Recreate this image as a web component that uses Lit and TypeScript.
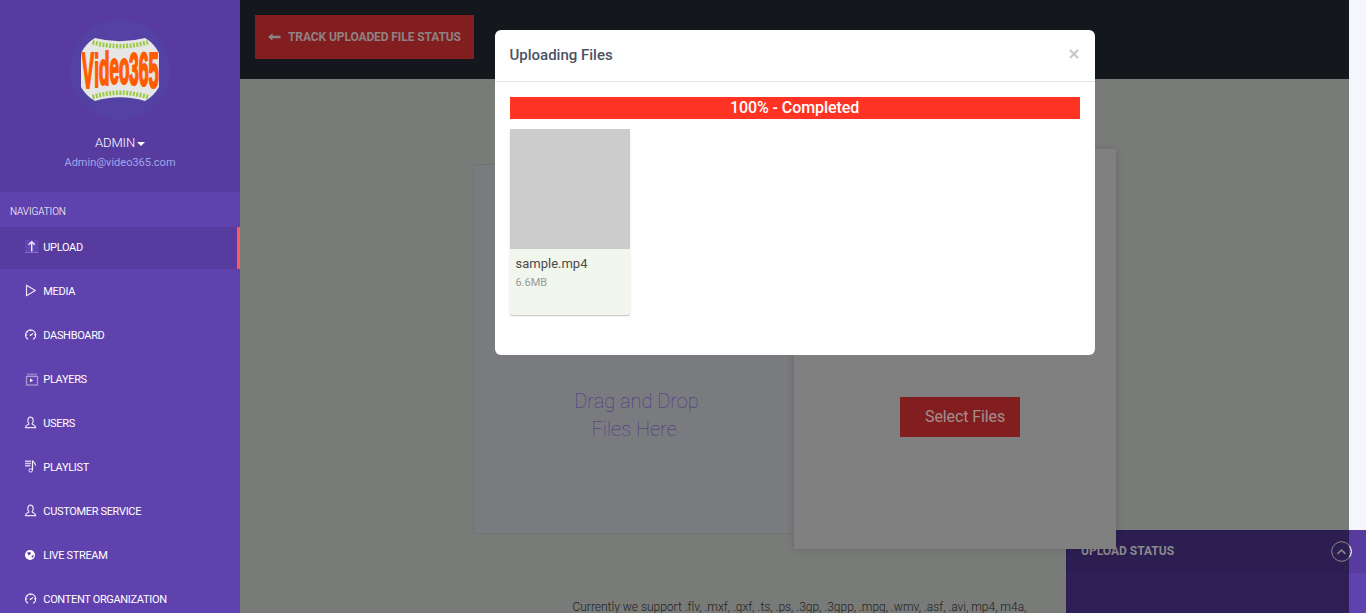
import { LitElement, html, css, svg } from "lit";
import { customElement } from "lit/decorators.js";

const icons: Record<string, any> = {
  upload: svg`<rect x="0" y="0" width="13.500" height="12" fill="#6545b4"/><path d="M0 12.500H13.500" stroke="#8570c6"/><path d="M6.700 11.500V2M3.600 4.800L6.700 1.700L9.800 4.800" stroke="#ece8f8" stroke-width="1.500" fill="none"/>`,
  media: svg`<path d="M1.500 1.200V11.700L10.300 6.400Z" stroke="#e8e4f4" stroke-width="1.200" fill="none" stroke-linejoin="round"/>`,
  gauge: svg`<path d="M3.300 11.200L1.900 10.500A5.100 5.100 0 1 1 9.300 10.500L7.900 11.200M5.600 7.200L8.200 5.400M5.500 2V3.300M2.200 3.600L3 4.400M.8 6.900H2.200M9 6.900H10.400" stroke="#efecf8" stroke-width="1.100" fill="none"/><circle cx="5.500" cy="7.200" r=".8" fill="#fff"/>`,
  players: svg`<path d="M2 2.500H12" stroke="#8d78c9" stroke-width="2"/><rect x="1.500" y="4.500" width="11" height="8.500" fill="none" stroke="#ab9cd9" stroke-width="1.200"/><path d="M5 6.600V10.200L8.200 8.400Z" fill="#fff"/>`,
  user: svg`<path d="M3.900 7.800C2.200 5.800 2.400 1.200 5.500 1.200S8.800 5.800 7.100 7.800C7.300 9 10.600 8.800 10.600 11.600H.5C.5 8.800 3.700 9 3.900 7.800Z" stroke="#e8e4f4" stroke-width="1.200" fill="none"/>`,
  playlist: svg`<path d="M0 1.200H6M0 3.500H6M0 5.800H5.500" stroke="#d0c8ea" stroke-width="1.500"/><path d="M7.500 10.500V.5C8 2.500 10.500 2.500 10.700 5.500" stroke="#efecf8" stroke-width="1.200" fill="none"/><circle cx="5.700" cy="10.400" r="1.700" stroke="#efecf8" fill="none"/>`,
  globe: svg`<circle cx="5" cy="7" r="5" fill="#fff"/><path d="M2.200 4.600L5 4L6.200 5.300L4.800 6.700L3.400 7.600ZM6.500 7.800L8.700 7L8.300 9.100L6.900 10.100Z" fill="#6042ae"/>`,
};

const items = [
  ["upload", "UPLOAD"], ["media", "MEDIA"], ["gauge", "DASHBOARD"],
  ["players", "PLAYERS"], ["user", "USERS"], ["playlist", "PLAYLIST"],
  ["user", "CUSTOMER SERVICE"], ["globe", "LIVE STREAM"], ["gauge", "CONTENT ORGANIZATION"],
];

@customElement("side-nav")
class SideNav extends LitElement {
  static styles = css`
    :host { display: block; width: 240px; height: 613px; overflow: hidden; background: #6042ae; color: #fff; }
    .profile { height: 192px; box-sizing: border-box; padding-top: 20px; background: #573b9f; display: flex; flex-direction: column; align-items: center; }
    .logo { width: 100px; height: 100px; display: block; }
    .word { font: 700 46px "Liberation Sans", sans-serif; }
    .name { margin-top: 14px; font-size: 13px; line-height: 18px; font-weight: 300; letter-spacing: -0.1px; display: flex; align-items: center; gap: 2px; }
    .caret { border: 4px solid transparent; border-top-color: #fff; border-bottom: 0; margin-top: 2px; }
    .mail { margin-top: 3px; font-size: 11px; line-height: 16px; color: #9ea8ea; }
    .title { height: 35px; box-sizing: border-box; padding: 12px 10px 0; font-size: 10px; line-height: 15px; font-weight: 300; letter-spacing: -0.1px; }
    .item { height: 42px; margin-bottom: 2px; display: flex; align-items: center; padding-left: 25px; font-size: 11px; letter-spacing: -0.33px; box-sizing: border-box; }
    .item.active { background: #573b9f; border-right: 3px solid #ff5a5f; }
    .icon { width: 18.3px; height: 14px; flex: none; overflow: visible; margin-top: -2px; }
    .label { margin-top: -1px; }
  `;
  render() {
    return html`
      <div class="profile">
        <svg class="logo" viewBox="0 0 100 100">
          <circle cx="50" cy="50" r="50" fill="#5342a3"/>
          <path d="M25 18Q50 24.500 75 18Q84 23 89 33V67Q84 76 75 81Q50 73.500 25 81Q16 76 11 67V33Q16 23 25 18Z" fill="#e6e6e6"/>
          <path d="M22.500 22.300Q50 30 78 22.300M22.500 77Q50 68.500 78 77" fill="none" stroke="#9acb43" stroke-width="4.500" stroke-dasharray="2 1.400"/>
          <g transform="scale(.37 1)">
            <text class="word" x="32" y="68" fill="#ff5c00" stroke="#ff5c00" stroke-width="2.200"><tspan font-size="50">V</tspan><tspan y="67" font-size="47">i</tspan><tspan y="65">d</tspan><tspan y="64">e</tspan><tspan y="64">o</tspan><tspan y="65">3</tspan><tspan y="66" font-size="48">6</tspan><tspan y="68" font-size="50">5</tspan></text>
          </g>
        </svg>
        <div class="name">ADMIN<span class="caret"></span></div>
        <div class="mail">Admin@video365.com</div>
      </div>
      <div class="title">NAVIGATION</div>
      ${items.map(([icon, label], i) => html`
        <div class="item ${i === 0 ? "active" : ""}">
          <svg class="icon" viewBox="0 0 18 14" preserveAspectRatio="xMinYMid meet">${icons[icon]}</svg><span class="label">${label}</span>
        </div>`)}
    `;
  }
}

@customElement("upload-modal")
class UploadModal extends LitElement {
  static styles = css`
    :host { display: block; width: 600px; height: 325px; background: #fff; border-radius: 6px; box-sizing: border-box; }
    .head { height: 52px; box-sizing: border-box; border-bottom: 1px solid #e5e5e5; padding: 0 15px 2px 14.5px; display: flex; align-items: center; justify-content: space-between; color: #4d5263; font-size: 15px; font-weight: 500; }
    .close { width: 12px; height: 12px; margin-top: -1px; }
    .body { padding: 15px; }
    .bar { height: 22px; line-height: 22px; background: #ff3323; color: #fff; text-align: center; font-size: 16px; font-weight: 500; letter-spacing: -0.08px; padding-right: 1px; box-sizing: border-box; }
    .file { width: 120px; height: 186px; margin-top: 10px; background: #f1f7ed; border-radius: 2px; box-shadow: 0 1px 1px rgba(0,0,0,.18), 0 1px 3px rgba(0,0,0,.08); }
    .thumb { height: 120px; background: #ccc; }
    .fname { padding: 6px 5.5px 0; font-size: 13px; line-height: 18px; color: #4b4b4b; }
    .size { padding: 1px 5.5px; font-size: 11px; line-height: 17px; color: #999; }
  `;
  render() {
    return html`
      <div class="head"><span>Uploading Files</span>
        <svg class="close" viewBox="0 0 12 12"><path d="M2 2L10 10M10 2L2 10" stroke="#c8c8c8" stroke-width="2.200"/></svg></div>
      <div class="body">
        <div class="bar">100% - Completed</div>
        <div class="file"><div class="thumb"></div><div class="fname">sample.mp4</div><div class="size">6.6MB</div></div>
      </div>`;
  }
}

@customElement("app-root")
class AppRoot extends LitElement {
  static styles = css`
    :host { display: flex; position: relative; width: 1366px; height: 613px; overflow: hidden; background: #f5f6fb; font-family: Roboto, sans-serif; }
    .main { width: 1109px; height: 613px; background: #797b79; overflow: hidden; }
    .top { height: 79px; background: #14181d; box-sizing: border-box; padding: 15px; }
    .track { width: 219px; height: 44px; box-sizing: border-box; padding-left: 13px; display: flex; align-items: center; gap: 7px; background: #821e20; color: #8f8282; font-size: 12px; font-weight: 700; letter-spacing: -0.1px; white-space: nowrap; }
    .arrow { width: 13px; height: 8px; flex: none; }
    .panels { display: flex; align-items: center; margin: 70px 0 0 233px; height: 400px; position: relative; z-index: 2; width: 643px; }
    .drop { width: 321px; height: 370px; box-sizing: border-box; border: 1px solid #717274; border-right: 0; background: #7a7b7f; color: #4a3488; font-size: 20px; line-height: 28px; font-weight: 100; text-align: center; padding-top: 222px; }
    .lead { padding-left: 5px; }
    .select { width: 322px; height: 400px; background: #808080; box-shadow: 0 0 8px rgba(0,0,0,.14); box-sizing: border-box; padding: 248px 0 0 106px; }
    .button { width: 120px; height: 40px; box-sizing: border-box; padding-left: 25px; line-height: 39px; background: #821e20; color: #a38f8f; font-size: 16px; letter-spacing: -0.1px; white-space: nowrap; }
    .note { margin: 49px 0 0 332.5px; font-size: 12px; line-height: 18px; font-weight: 300; color: #222; white-space: nowrap; letter-spacing: -0.01px; }
    .status { position: absolute; left: 1066px; top: 530px; width: 300px; height: 83px; background: linear-gradient(90deg, #301f57 283px, #6042ae 283px); }
    .bar { height: 43px; box-sizing: border-box; padding: 0 14.5px 0 15px; display: flex; justify-content: space-between; align-items: center; background: linear-gradient(90deg, #2c1e50 283px, #573b9f 283px); color: #8a8a8c; font-size: 12px; font-weight: 700; }
    .up { width: 21px; height: 21px; }
    .caption { margin-top: -2px; }
    .modal { position: absolute; left: 495px; top: 30px; z-index: 3; }
  `;
  render() {
    return html`
      <side-nav></side-nav>
      <div class="main">
        <div class="top"><div class="track">
          <svg class="arrow" viewBox="0 0 13 8"><path d="M0 4L4.500 .3V2.700H12.500V5.300H4.500V7.700Z" fill="#8f8282"/></svg>TRACK UPLOADED FILE STATUS</div></div>
        <div class="panels">
          <div class="drop"><div class="lead">Drag and Drop</div><div>Files Here</div></div>
          <div class="select"><div class="button">Select Files</div></div>
        </div>
        <div class="note">Currently we support .flv, .mxf, .gxf, .ts, .ps, .3gp, .3gpp, .mpg, .wmv, .asf, .avi, mp4, m4a,</div>
      </div>
      <div class="status"><div class="bar"><span class="caption">UPLOAD STATUS</span>
        <svg class="up" viewBox="0 0 21 21"><circle cx="10.500" cy="10.500" r="9.800" fill="none" stroke="#8a8a8c"/><path d="M18.500 5A9.800 9.800 0 0 1 18.500 16" fill="none" stroke="#fff"/><path d="M6.500 12.800L10.500 9L14.500 12.800" fill="none" stroke="#8a8a8c" stroke-width="1.600"/></svg></div></div>
      <upload-modal class="modal"></upload-modal>
    `;
  }
}
